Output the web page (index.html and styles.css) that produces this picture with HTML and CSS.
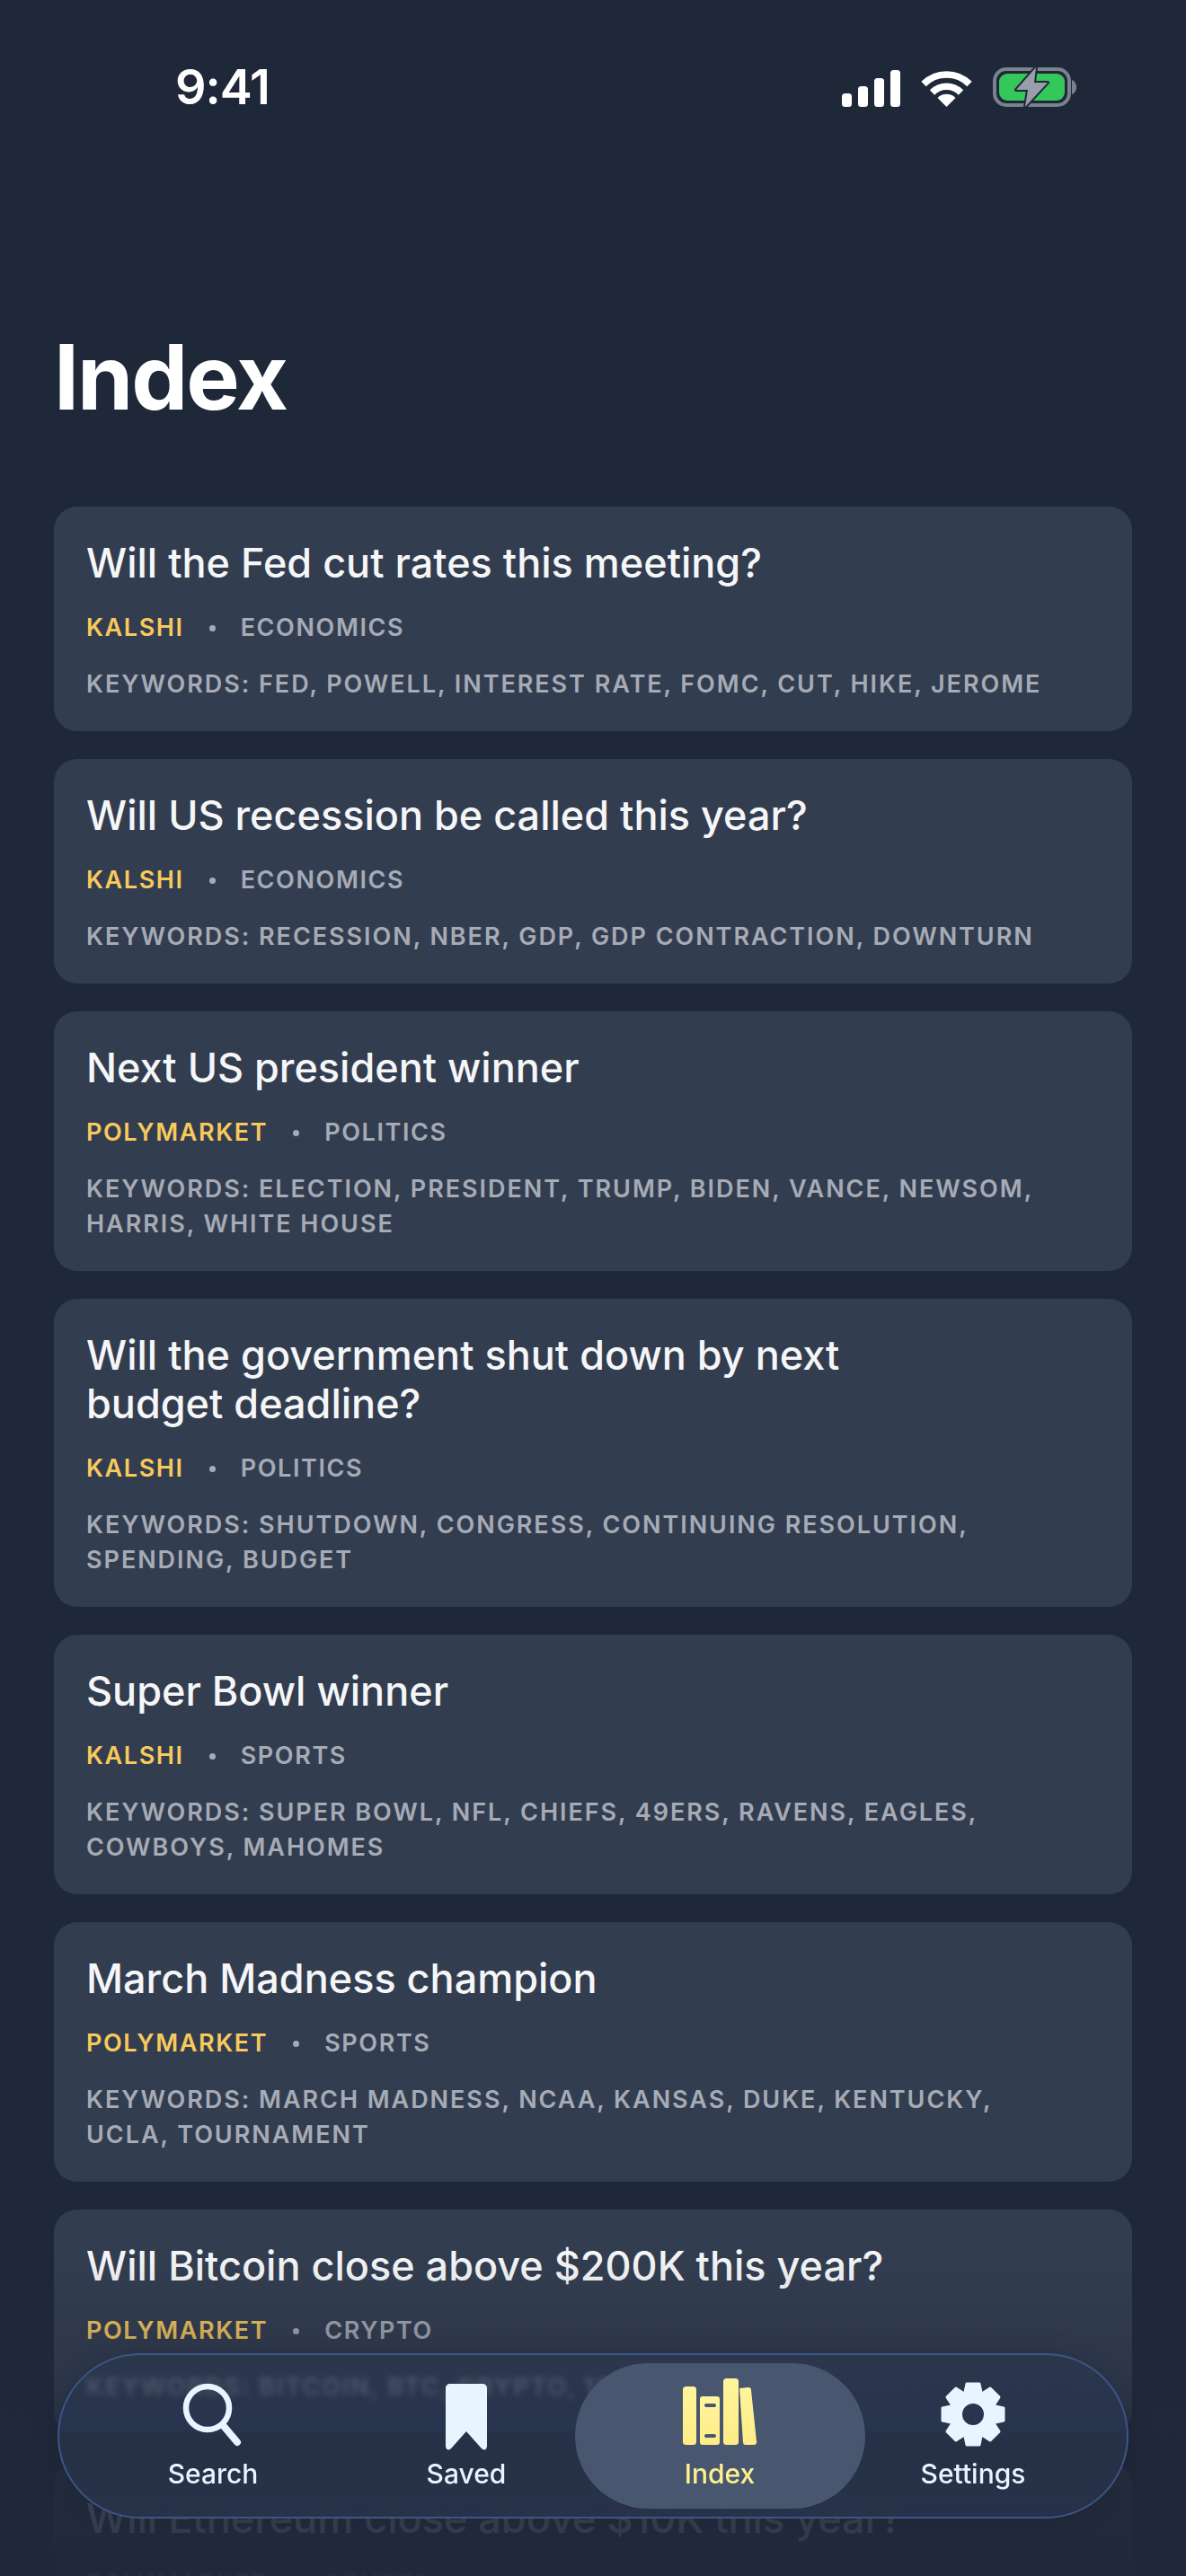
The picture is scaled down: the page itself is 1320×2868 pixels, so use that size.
FILE: index.html
```html
<!DOCTYPE html>
<html lang="en">
<head>
  <meta charset="UTF-8" />
  <meta name="viewport" content="width=device-width, initial-scale=1.0">
  <title>Index</title>
  <link rel="stylesheet" href="styles.css">
</head>
<body>
  <div class="screen">
    <div class="status-bar">
      <span class="time">9:41</span>
      <div class="status-icons">
        <svg class="signal" width="65" height="41" viewBox="0 0 65 41" fill="#fff">
          <rect x="0" y="26" width="11" height="15" rx="3.5"/>
          <rect x="18" y="18" width="11" height="23" rx="3.5"/>
          <rect x="36" y="9" width="11" height="32" rx="3.5"/>
          <rect x="54" y="0" width="11" height="41" rx="3.5"/>
        </svg>
        <svg class="wifi" width="57" height="41" viewBox="0 0 57 41" fill="none" stroke="#fff" stroke-width="7.5">
          <path d="M3 15.5A36 36 0 0 1 54 15.5"/>
          <path d="M12.5 25A22.5 22.5 0 0 1 44.500 25"/>
          <path d="M28.500 41L18.500 31A14 14 0 0 1 38.500 31Z" fill="#fff" stroke="none"/>
        </svg>
        <svg class="battery" width="93" height="46" viewBox="0 0 93 46">
          <rect x="2" y="3" width="83" height="40" rx="13" fill="none" stroke="#7b818d" stroke-width="4"/>
          <path d="M88 15C91 16 93 19 93 23C93 27 91 30 88 31Z" fill="#7b818d"/>
          <rect x="7" y="8" width="73" height="30" rx="9" fill="#34c759"/>
          <path d="M48 1L26 26L39 26L36 45L61 18L46 18Z" fill="#9a9ea8" stroke="#1f2839" stroke-width="4" stroke-linejoin="round" paint-order="stroke"/>
        </svg>
      </div>
    </div>

    <h1 class="page-title">Index</h1>

    <div class="market-list">
      <div class="market-card">
        <h3 class="market-title">Will the Fed cut rates this meeting?</h3>
        <div class="market-meta"><span class="source">KALSHI</span><i class="dot"></i><span>ECONOMICS</span></div>
        <p class="keywords">KEYWORDS: FED, POWELL, INTEREST RATE, FOMC, CUT, HIKE, JEROME</p>
      </div>
      <div class="market-card">
        <h3 class="market-title">Will US recession be called this year?</h3>
        <div class="market-meta"><span class="source">KALSHI</span><i class="dot"></i><span>ECONOMICS</span></div>
        <p class="keywords">KEYWORDS: RECESSION, NBER, GDP, GDP CONTRACTION, DOWNTURN</p>
      </div>
      <div class="market-card">
        <h3 class="market-title">Next US president winner</h3>
        <div class="market-meta"><span class="source">POLYMARKET</span><i class="dot"></i><span>POLITICS</span></div>
        <p class="keywords">KEYWORDS: ELECTION, PRESIDENT, TRUMP, BIDEN, VANCE, NEWSOM, HARRIS, WHITE HOUSE</p>
      </div>
      <div class="market-card">
        <h3 class="market-title">Will the government shut down by next budget deadline?</h3>
        <div class="market-meta"><span class="source">KALSHI</span><i class="dot"></i><span>POLITICS</span></div>
        <p class="keywords">KEYWORDS: SHUTDOWN, CONGRESS, CONTINUING RESOLUTION, SPENDING, BUDGET</p>
      </div>
      <div class="market-card">
        <h3 class="market-title">Super Bowl winner</h3>
        <div class="market-meta"><span class="source">KALSHI</span><i class="dot"></i><span>SPORTS</span></div>
        <p class="keywords">KEYWORDS: SUPER BOWL, NFL, CHIEFS, 49ERS, RAVENS, EAGLES, COWBOYS, MAHOMES</p>
      </div>
      <div class="market-card">
        <h3 class="market-title">March Madness champion</h3>
        <div class="market-meta"><span class="source">POLYMARKET</span><i class="dot"></i><span>SPORTS</span></div>
        <p class="keywords">KEYWORDS: MARCH MADNESS, NCAA, KANSAS, DUKE, KENTUCKY, UCLA, TOURNAMENT</p>
      </div>
      <div class="market-card">
        <h3 class="market-title">Will Bitcoin close above $200K this year?</h3>
        <div class="market-meta"><span class="source">POLYMARKET</span><i class="dot"></i><span>CRYPTO</span></div>
        <p class="keywords">KEYWORDS: BITCOIN, BTC, CRYPTO, 100K, 200K</p>
      </div>
      <div class="market-card">
        <h3 class="market-title">Will Ethereum close above $10K this year?</h3>
        <div class="market-meta"><span class="source">POLYMARKET</span><i class="dot"></i><span>CRYPTO</span></div>
      </div>
    </div>

    <div class="bottom-fade"></div>

    <nav class="tab-bar">
      <div class="tab">
        <svg class="tab-icon" width="80" height="80" viewBox="0 0 80 80" fill="none" stroke="#e8f4ff" stroke-width="6.500" stroke-linecap="round">
          <circle cx="34" cy="33" r="24"/>
          <path d="M51 52L67 71" stroke-width="8"/>
        </svg>
        <span>Search</span>
      </div>
      <div class="tab">
        <svg class="tab-icon" width="80" height="80" viewBox="0 0 80 80" fill="#e8f4ff">
          <path d="M22 6C19 6 17 8 17 11V75C17 80 21 81 24 77L40 59L56 77C59 81 63 80 63 75V11C63 8 61 6 58 6H22Z"/>
        </svg>
        <span>Saved</span>
      </div>
      <div class="tab tab-active">
        <svg class="tab-icon" width="84" height="80" viewBox="0 0 84 80">
          <defs>
            <linearGradient id="bookFill" x1="0" y1="0" x2="0" y2="1">
              <stop offset="0" stop-color="#fff59d"/>
              <stop offset="1" stop-color="#ffec85"/>
            </linearGradient>
          </defs>
          <g fill="url(#bookFill)">
            <rect x="1" y="9" width="15" height="65" rx="3.500"/>
            <path fill-rule="evenodd" d="M23 20H39A3 3 0 0 1 42 23V71A3 3 0 0 1 39 74H23A3 3 0 0 1 20 71V23A3 3 0 0 1 23 20ZM27 28A2 2 0 0 0 27 32H36A2 2 0 0 0 36 28ZM27 62A2 2 0 0 0 27 66H36A2 2 0 0 0 36 62Z"/>
            <rect x="46" y="0" width="17" height="74" rx="3.500"/>
            <path d="M64 11L74 10A3 3 0 0 1 77 13L83 70A3 3 0 0 1 80 74H71A3 3 0 0 1 68 71Z"/>
          </g>
        </svg>
        <span>Index</span>
      </div>
      <div class="tab">
        <svg class="tab-icon" width="80" height="80" viewBox="-40 -40 80 80" fill="#e8f4ff">
          <defs>
            <path id="gearTooth" d="M-7 -34H7L10 -20H-10Z" stroke="#e8f4ff" stroke-width="3" stroke-linejoin="round"/>
          </defs>
          <path fill-rule="evenodd" d="M0 -26A26 26 0 1 1 0 26A26 26 0 1 1 0 -26ZM0 -12A12 12 0 1 0 0 12A12 12 0 1 0 0 -12Z"/>
          <use href="#gearTooth"/>
          <use href="#gearTooth" transform="rotate(45)"/>
          <use href="#gearTooth" transform="rotate(90)"/>
          <use href="#gearTooth" transform="rotate(135)"/>
          <use href="#gearTooth" transform="rotate(180)"/>
          <use href="#gearTooth" transform="rotate(225)"/>
          <use href="#gearTooth" transform="rotate(270)"/>
          <use href="#gearTooth" transform="rotate(315)"/>
        </svg>
        <span>Settings</span>
      </div>
    </nav>
  </div>
</body>
</html>
```

FILE: styles.css
```css
html, body {
  margin: 0;
  padding: 0;
  background-color: #1f2839;
  color: #ffffff;
  font-family: 'Inter', 'Liberation Sans', sans-serif;
}
.screen {
  position: relative;
  width: 1320px;
  height: 2868px;
  overflow: hidden;
  background-color: #1f2839;
}
.status-bar {
  display: flex;
  justify-content: space-between;
  align-items: center;
  height: 46px;
  padding: 74px 122px 0 195px;
}
.time {
  font-size: 54px;
  font-weight: 600;
  letter-spacing: -1px;
  line-height: 46px;
}
.status-icons {
  display: flex;
  align-items: flex-end;
  gap: 23px;
}
.status-icons svg {
  display: block;
}
.signal, .wifi {
  margin-bottom: 1px;
}
.page-title {
  height: 110px;
  margin: 0;
  padding: 245px 60px 0;
  font-size: 100px;
  font-weight: 700;
  letter-spacing: -2px;
  line-height: 110px;
}
.market-list {
  display: flex;
  flex-direction: column;
  gap: 31px;
  margin-top: 89px;
  padding: 0 60px;
}
.market-card {
  padding: 36px 36px 33px;
  border-radius: 26px;
  background-color: #333d50;
}
.market-title {
  max-width: 930px;
  margin: 0;
  font-size: 45px;
  font-weight: 500;
  line-height: 54px;
  color: #f5f6f7;
}
.market-meta {
  display: flex;
  align-items: center;
  gap: 28px;
  margin-top: 25px;
  font-size: 27px;
  font-weight: 600;
  letter-spacing: 1.6px;
  line-height: 40px;
  color: #a6abb5;
}
.source {
  color: #f8c95c;
}
.dot {
  width: 7px;
  height: 7px;
  border-radius: 50%;
  background-color: #a6abb5;
}
.keywords {
  max-width: 1075px;
  margin: 23px 0 0;
  font-size: 27px;
  font-weight: 600;
  letter-spacing: 1.95px;
  line-height: 39px;
  color: #a6abb5;
}
.bottom-fade {
  position: absolute;
  left: 0;
  right: 0;
  bottom: 0;
  height: 360px;
  background: linear-gradient(to bottom, rgba(31, 40, 57, 0), rgba(32, 39, 57, 0.3) 40%, rgba(32, 39, 57, 0.85) 75%, rgba(32, 39, 57, 0.96));
}
.tab-bar {
  position: absolute;
  left: 64px;
  top: 2620px;
  box-sizing: border-box;
  display: grid;
  grid-template-columns: repeat(4, 1fr);
  width: 1192px;
  height: 184px;
  padding: 0 30px;
  border: 2px solid #3a5788;
  border-radius: 92px;
  background: linear-gradient(to bottom, rgba(43, 55, 82, 0.5), rgba(41, 53, 80, 0.62) 30%, rgba(41, 53, 80, 0.94) 42%, rgba(38, 49, 70, 0.97) 55%, rgba(41, 50, 74, 0.98));
  backdrop-filter: blur(3px);
  box-shadow: 0 0 24px rgba(20, 26, 40, 0.25);
}
.tab {
  position: relative;
  display: flex;
  flex-direction: column;
  align-items: center;
  padding-top: 26px;
  font-size: 30px;
  font-weight: 500;
  line-height: 36px;
  color: #e8f4ff;
}
.tab span {
  position: relative;
}
.tab-icon {
  position: relative;
  display: block;
  margin-bottom: 8px;
}
.tab-active {
  color: #fdf08e;
}
.tab-active::before {
  content: "";
  position: absolute;
  top: 9px;
  bottom: 9px;
  left: -20px;
  right: -21px;
  border-radius: 81px;
  background-color: #495670;
}
```
